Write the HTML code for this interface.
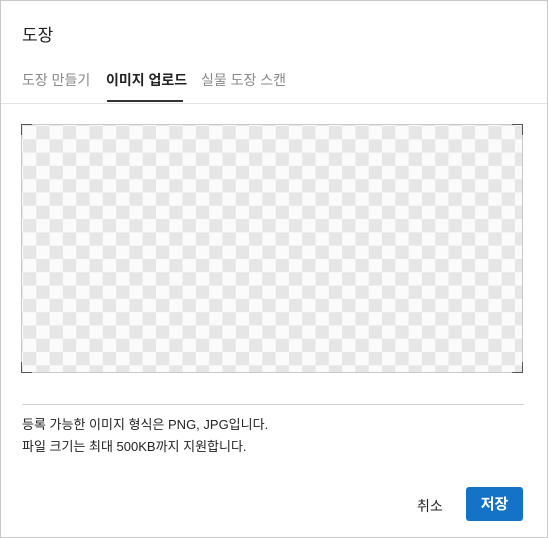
<!DOCTYPE html>
<html><head><meta charset="utf-8"><style>
html,body{margin:0;padding:0;}
body{width:548px;height:538px;background:#fff;font-family:"Liberation Sans","Noto Sans CJK KR",sans-serif;position:relative;overflow:hidden;}
.frame{position:absolute;left:0;top:0;width:546px;height:536px;border:1px solid #c8c8c8;}
.title{position:absolute;left:22px;top:21px;font-size:17px;color:#222;}
.tab{position:absolute;top:70px;font-size:14px;color:#888;}
.tab.on{color:#222;font-weight:bold;}
.ul{position:absolute;left:107px;top:100px;width:76px;height:2px;background:#333;}
.hr{position:absolute;left:1px;top:103px;width:546px;height:1px;background:#e4e4e4;}
.box{position:absolute;left:21px;top:124px;width:500px;height:247px;border:1px solid #c9c9c9;
background:repeating-conic-gradient(#e6e6e6 0 25%,#fbfbfb 0 50%) 1px 1px/26.6px 26.6px;}
.c{position:absolute;width:10px;height:10px;border-color:#555;border-style:solid;border-width:0;}
.hr2{position:absolute;left:22px;top:404px;width:502px;height:1px;background:#d0d0d0;}
.txt{position:absolute;left:22px;top:414px;font-size:13px;color:#222;line-height:22px;}
.cancel{position:absolute;left:417px;top:496px;font-size:14px;color:#222;}
.save{position:absolute;left:466px;top:487px;width:57px;height:34px;background:#1473c6;border-radius:3px;color:#fff;font-size:15px;font-weight:bold;text-align:center;line-height:36px;}
</style></head><body>
<div class="frame"></div>
<div class="title">도장</div>
<div class="tab" style="left:22px">도장 만들기</div>
<div class="tab on" style="left:106px">이미지 업로드</div>
<div class="tab" style="left:201px">실물 도장 스캔</div>
<div class="ul"></div>
<div class="hr"></div>
<div class="box">
<div class="c" style="left:-1px;top:-1px;border-top-width:1px;border-left-width:1px"></div>
<div class="c" style="right:-1px;top:-1px;border-top-width:1px;border-right-width:1px"></div>
<div class="c" style="left:-1px;bottom:-1px;border-bottom-width:1px;border-left-width:1px"></div>
<div class="c" style="right:-1px;bottom:-1px;border-bottom-width:1px;border-right-width:1px"></div>
</div>
<div class="hr2"></div>
<div class="txt">등록 가능한 이미지 형식은 PNG, JPG입니다.<br>파일 크기는 최대 500KB까지 지원합니다.</div>
<div class="cancel">취소</div>
<div class="save">저장</div>
</body></html>
